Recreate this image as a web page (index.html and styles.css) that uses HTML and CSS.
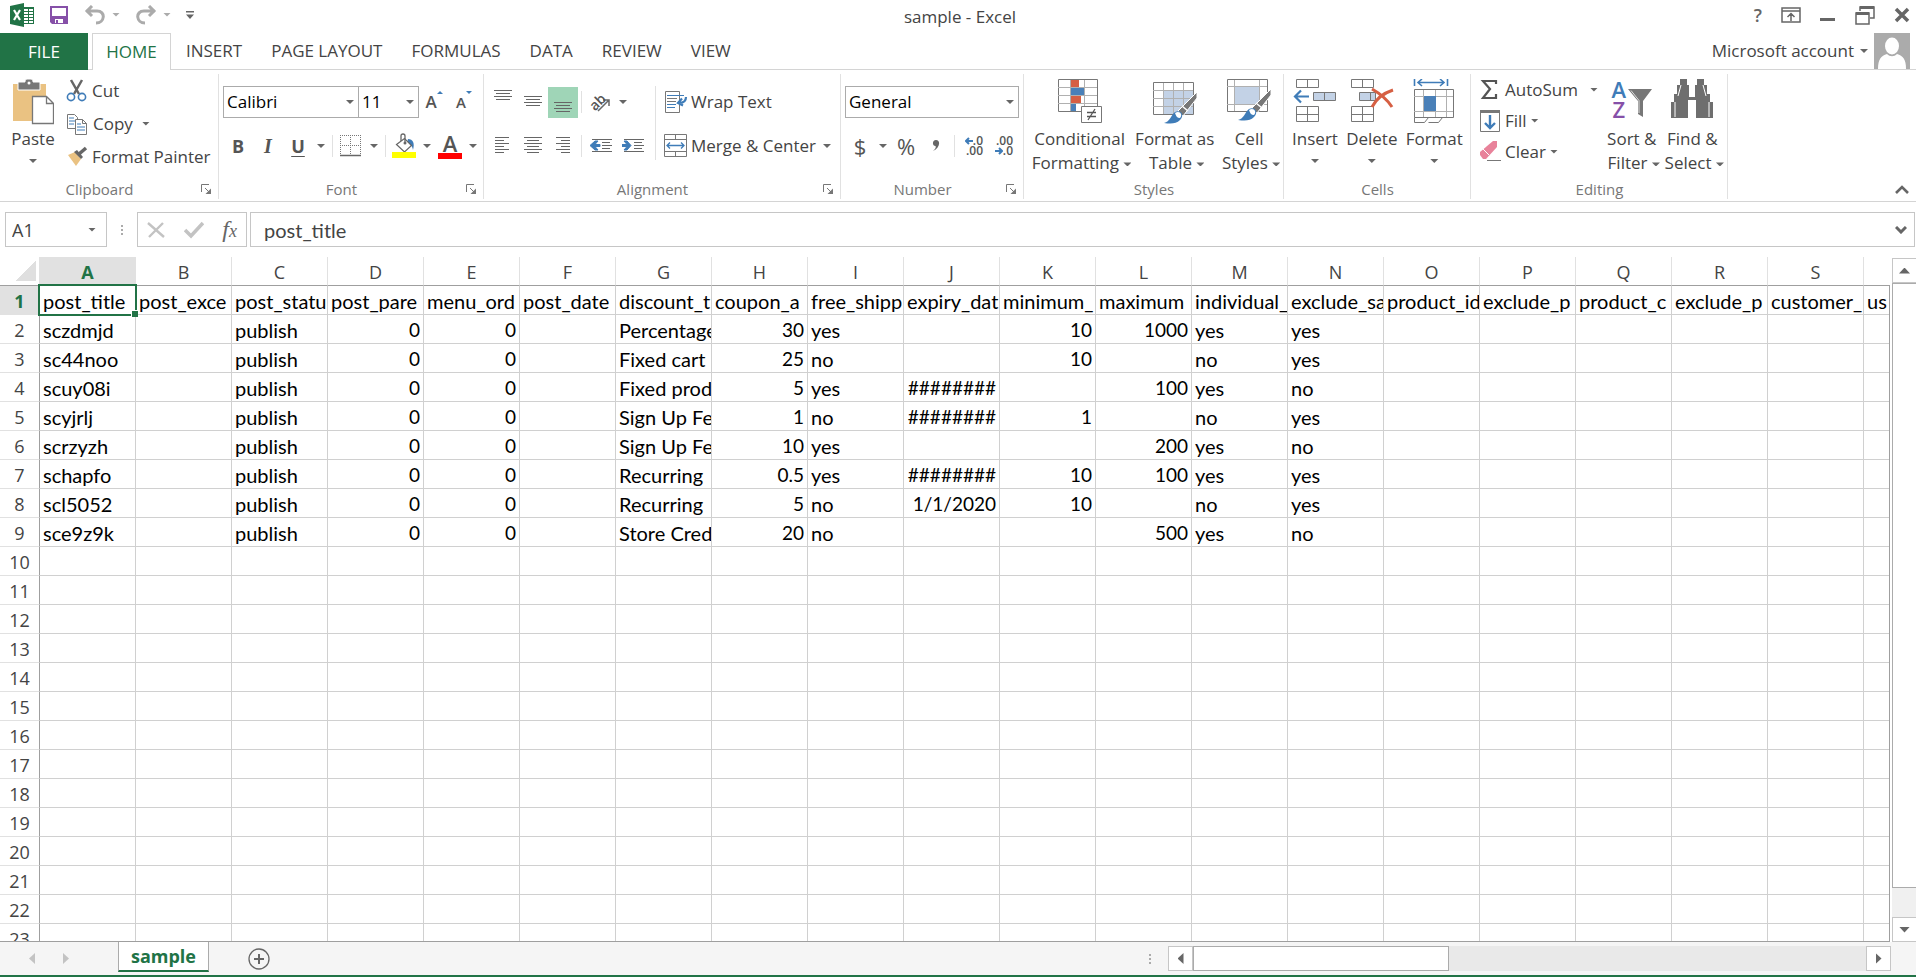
FILE: index.html
```html
<!DOCTYPE html>
<html lang="en">
<head>
    <meta charset="UTF-8">
    <meta name="viewport" content="width=device-width, initial-scale=1.0">
    <title>sample - Excel</title>
    <link rel="stylesheet" href="styles.css">
</head>
<body>
    <header class="title-bar">
        <div class="quick-access">
            <svg class="app-logo" width="24" height="24" viewBox="0 0 24 24">
                <path d="M12 4h12v17H12z" fill="#217346"/>
                <path d="M14 6h4v2h-4zM19 6h4v2h-4zM14 9h4v2h-4zM19 9h4v2h-4zM14 12h4v2h-4zM19 12h4v2h-4zM14 15h4v2h-4zM19 15h4v2h-4zM14 18h4v2h-4zM19 18h4v2h-4z" fill="#fff"/>
                <path d="M0 3L14 0v24L0 21z" fill="#217346"/>
                <path d="M4 7l6 10M10 7l-6 10" stroke="#fff" stroke-width="2.200"/>
            </svg>
            <button class="qa-button" aria-label="Save">
                <svg width="20" height="20" viewBox="0 0 20 20">
                    <path d="M1 1h18v18H3l-2-2z" fill="#8650a8"/>
                    <path d="M3 3h14v8H3zM6 14h8v4H6z" fill="#fff"/>
                    <path d="M7 15h2v3H7z" fill="#8650a8"/>
                </svg>
            </button>
            <button class="qa-button" aria-label="Undo">
                <svg width="22" height="20" viewBox="0 0 22 20"><path d="M8 1L3 6l5 5M2 6h11c9 0 8 12-1 12" fill="none" stroke="#ababab" stroke-width="3"/></svg>
            </button>
            <span class="caret light"></span>
            <button class="qa-button" aria-label="Redo">
                <svg width="22" height="20" viewBox="0 0 22 20"><path d="M14 1l5 5-5 5M20 6H9C0 6 1 18 10 18" fill="none" stroke="#ababab" stroke-width="3"/></svg>
            </button>
            <span class="caret light"></span>
            <button class="qa-button customize" aria-label="Customize">
                <svg width="8" height="8" viewBox="0 0 8 8"><path d="M0 0h8v1.500H0zM0 3.500h8L4 8z" fill="#666"/></svg>
            </button>
        </div>
        <h1>sample - Excel</h1>
        <div class="window-controls">
            <button class="help" aria-label="Help">?</button>
            <button aria-label="Ribbon display options">
                <svg width="20" height="16" viewBox="0 0 20 16"><path d="M1 1h18v14H1zM1 4h18M10 14V7M6.500 10L10 6.500 13.500 10" fill="none" stroke="#666" stroke-width="1.500"/></svg>
            </button>
            <button aria-label="Minimize">
                <svg width="16" height="16" viewBox="0 0 16 16"><path d="M0 11h15v3H0z" fill="#666"/></svg>
            </button>
            <button aria-label="Restore">
                <svg width="20" height="20" viewBox="0 0 20 20"><path d="M5 6V2h14v11h-4M1 8h13v11H1z" fill="none" stroke="#666" stroke-width="1.500"/><path d="M5 1h14v3H5zM1 7h13v3H1z" fill="#666"/></svg>
            </button>
            <button aria-label="Close">
                <svg width="16" height="16" viewBox="0 0 16 16"><path d="M2 2l12 12M14 2L2 14" stroke="#666" stroke-width="3.500"/></svg>
            </button>
        </div>
    </header>

    <nav class="tabs">
        <button class="tab file">FILE</button>
        <button class="tab active">HOME</button>
        <button class="tab">INSERT</button>
        <button class="tab">PAGE LAYOUT</button>
        <button class="tab">FORMULAS</button>
        <button class="tab">DATA</button>
        <button class="tab">REVIEW</button>
        <button class="tab">VIEW</button>
        <button class="account">
            Microsoft account
            <span class="caret"></span>
            <svg width="36" height="36" viewBox="0 0 36 36">
                <path d="M0 0h36v36H0z" fill="#ababab"/>
                <ellipse cx="18" cy="13" rx="7" ry="8.500" fill="#fff"/>
                <path d="M4 36c0-10 3-13 9-15 3 3 7 3 10 0 6 2 9 5 9 15z" fill="#fff"/>
            </svg>
        </button>
    </nav>

    <section class="ribbon">
        <div class="group clipboard">
            <div class="group-body">
                <button class="big-button paste">
                    <svg width="42" height="46" viewBox="0 0 42 46">
                        <path d="M1 5h33v37H1z" fill="#eac282"/>
                        <path d="M6 3h7V2q0-2 2-2h4q2 0 2 2v1h7v8H6z" fill="#777" stroke="#fff"/>
                        <circle cx="17" cy="4" r="1.500" fill="#fff"/>
                        <path d="M20.500 17.500h14l7 7v20h-21zM34.500 17.500v7h7" fill="#fff" stroke="#777" stroke-width="1.300"/>
                    </svg>
                    <span>Paste</span>
                    <span class="caret"></span>
                </button>
                <div class="button-list">
                    <button class="small-button">
                        <svg width="22" height="24" viewBox="0 0 22 24">
                            <path d="M5 1l8 14M16 1L8 15" stroke="#666" stroke-width="2.500"/>
                            <circle cx="5" cy="18" r="3.600" fill="#fff" stroke="#3f7cb8" stroke-width="1.600"/>
                            <circle cx="16" cy="18" r="3.600" fill="#fff" stroke="#3f7cb8" stroke-width="1.600"/>
                        </svg>
                        Cut
                    </button>
                    <button class="small-button copy">
                        <svg width="22" height="24" viewBox="0 0 22 24">
                            <path d="M1.500 2.500h7l3 3v11h-10z" fill="#fff" stroke="#777"/>
                            <path d="M3 6h5M3 9h6M3 12h5" stroke="#3f7cb8"/>
                            <path d="M9.500 7.500h7l4 4v11h-11zM16.500 7.500v4h4" fill="#fff" stroke="#777"/>
                            <path d="M11 12h4M11 15h8M11 18h8" stroke="#3f7cb8"/>
                        </svg>
                        Copy
                        <span class="caret"></span>
                    </button>
                    <button class="small-button">
                        <svg width="22" height="24" viewBox="0 0 22 24">
                            <path d="M2 10l7-3 6 7-5 7z" fill="#eac282"/>
                            <path d="M8 7l3-2 6 7-2 2z" fill="#666"/>
                            <path d="M13 9l7-6" stroke="#666" stroke-width="3.500"/>
                        </svg>
                        Format Painter
                    </button>
                </div>
            </div>
            <div class="group-label"><span>Clipboard</span><button class="launcher" aria-label="Clipboard settings"><svg width="10" height="10" viewBox="0 0 10 10"><path d="M.5 8V.5H8M4 4l4 4" fill="none" stroke="#777"/><path d="M10 4.500V10H4.500z" fill="#777"/></svg></button></div>
        </div>

        <div class="group font">
            <div class="group-body">
                <div class="tool-rows">
                    <div class="tool-row">
                        <div class="combo font-name"><select aria-label="Font"><option>Calibri</option></select><span class="caret"></span></div>
                        <div class="combo font-size"><select aria-label="Font size"><option>11</option></select><span class="caret"></span></div>
                        <button class="tool grow-font" aria-label="Increase font size">A<svg width="6" height="22" viewBox="0 0 6 22"><path d="M0 3h6L3 0z" fill="#3f7cb8"/></svg></button>
                        <button class="tool shrink-font" aria-label="Decrease font size">A<svg width="6" height="22" viewBox="0 0 6 22"><path d="M0 0h6L3 3z" fill="#3f7cb8"/></svg></button>
                    </div>
                    <div class="tool-row">
                        <button class="tool bold">B</button>
                        <button class="tool italic">I</button>
                        <button class="tool underline">U</button>
                        <span class="caret"></span>
                        <span class="divider"></span>
                        <button class="tool" aria-label="Borders">
                            <svg width="22" height="22" viewBox="0 0 22 22"><path d="M.5 0v20M10.500 0v20M20.500 0v20M0 .5h21M0 10.500h21" stroke="#777" stroke-dasharray="1 1"/><path d="M0 20.500h21" stroke="#666" stroke-width="1.500"/></svg>
                        </button>
                        <span class="caret"></span>
                        <span class="divider"></span>
                        <button class="tool" aria-label="Fill color">
                            <svg width="24" height="26" viewBox="0 0 24 26">
                                <path d="M16 6c5 0 7 4 5 11-1-5-3-6-6-7z" fill="#3f7cb8"/>
                                <path d="M4.500 11.500l8-6 7 7-7 6.500z" fill="#fff" stroke="#666" stroke-width="1.200"/>
                                <path d="M9 8V3q0-2 2-2t2 2v7" fill="none" stroke="#666" stroke-width="1.300"/>
                                <circle cx="13" cy="10" r="1.500" fill="#666"/>
                                <path d="M0 19h24v6H0z" fill="#ff0"/>
                            </svg>
                        </button>
                        <span class="caret"></span>
                        <button class="tool font-color" aria-label="Font color">A</button>
                        <span class="caret"></span>
                    </div>
                </div>
            </div>
            <div class="group-label"><span>Font</span><button class="launcher" aria-label="Font settings"><svg width="10" height="10" viewBox="0 0 10 10"><path d="M.5 8V.5H8M4 4l4 4" fill="none" stroke="#777"/><path d="M10 4.500V10H4.500z" fill="#777"/></svg></button></div>
        </div>

        <div class="group alignment">
            <div class="group-body">
                <div class="tool-rows">
                    <div class="tool-row">
                        <button class="tool" aria-label="Top align"><svg width="18" height="24" viewBox="0 0 18 24"><path d="M0 .5h18M2 3.500h14M0 6.500h18M2 9.500h14" stroke="#666"/></svg></button>
                        <button class="tool" aria-label="Middle align"><svg width="18" height="24" viewBox="0 0 18 24"><path d="M0 6.500h18M2 9.500h14M0 12.500h18M2 15.500h14" stroke="#666"/></svg></button>
                        <button class="tool selected" aria-label="Bottom align"><svg width="18" height="24" viewBox="0 0 18 24"><path d="M0 12.500h18M2 15.500h14M0 18.500h18M2 21.500h14" stroke="#666"/></svg></button>
                        <span class="divider"></span>
                        <button class="tool" aria-label="Orientation"><span class="slanted">ab</span><svg width="14" height="14" viewBox="0 0 14 14" class="slanted-arrow"><path d="M1 13L12 2M6 2h6v6" fill="none" stroke="#666" stroke-width="1.500"/></svg></button>
                        <span class="caret"></span>
                    </div>
                    <div class="tool-row">
                        <button class="tool" aria-label="Align left"><svg width="18" height="18" viewBox="0 0 18 18"><path d="M1 .5h14M1 3.500h9M1 6.500h14M1 9.500h9M1 12.500h14M1 15.500h9" stroke="#666"/></svg></button>
                        <button class="tool" aria-label="Center"><svg width="18" height="18" viewBox="0 0 18 18"><path d="M0 .5h18M3 3.500h12M0 6.500h18M3 9.500h12M0 12.500h18M3 15.500h12" stroke="#666"/></svg></button>
                        <button class="tool" aria-label="Align right"><svg width="18" height="18" viewBox="0 0 18 18"><path d="M2 .5h14M7 3.500h9M2 6.500h14M7 9.500h9M2 12.500h14M7 15.500h9" stroke="#666"/></svg></button>
                        <span class="divider"></span>
                        <button class="tool indent" aria-label="Decrease indent"><svg width="22" height="16" viewBox="0 0 22 16"><path d="M2 1.500h20M12 4.500h8M12 7.500h10M12 10.500h8M2 13.500h20" stroke="#666"/><path d="M0 7.500L5 3h3L5 6.500h5v2H5L8 12H5z" fill="#3f7cb8" stroke="#3f7cb8"/></svg></button>
                        <button class="tool indent" aria-label="Increase indent"><svg width="22" height="16" viewBox="0 0 22 16"><path d="M2 1.500h20M12 4.500h8M12 7.500h10M12 10.500h8M2 13.500h20" stroke="#666"/><path d="M9 7.500L5 3H2l3 3.500H0v2h5L2 12h3z" fill="#3f7cb8" stroke="#3f7cb8"/></svg></button>
                    </div>
                </div>
                <span class="divider tall"></span>
                <div class="tool-rows">
                    <button class="wide-button">
                        <svg width="24" height="24" viewBox="0 0 24 24">
                            <path d="M1.500 1.500h14v21h-14z" fill="#fff" stroke="#777"/>
                            <path d="M3 5.500h17M3 14.500h9M3 17.500h8" stroke="#3f7cb8"/>
                            <path d="M3 8.500h10M3 11.500h9" stroke="#777"/>
                            <path d="M22 7c0 5-3 6-7 6M18 8.500L14 13l5 2.500" fill="none" stroke="#3f7cb8" stroke-width="2.200"/>
                        </svg>
                        Wrap Text
                    </button>
                    <button class="wide-button">
                        <svg width="24" height="24" viewBox="0 0 24 24">
                            <path d="M.5 .5h22v22H.5zM.5 5.500h22M.5 17.500h22M11.500 .5v5M11.500 17.500v5" fill="#fff" stroke="#777"/>
                            <path d="M3 11.500h17M6 8.500l-3 3 3 3M17 8.500l3 3-3 3" fill="none" stroke="#3f7cb8" stroke-width="1.300"/>
                        </svg>
                        Merge &amp; Center
                        <span class="caret"></span>
                    </button>
                </div>
            </div>
            <div class="group-label"><span>Alignment</span><button class="launcher" aria-label="Alignment settings"><svg width="10" height="10" viewBox="0 0 10 10"><path d="M.5 8V.5H8M4 4l4 4" fill="none" stroke="#777"/><path d="M10 4.500V10H4.500z" fill="#777"/></svg></button></div>
        </div>

        <div class="group number">
            <div class="group-body">
                <div class="tool-rows">
                    <div class="tool-row">
                        <div class="combo format"><select aria-label="Number format"><option>General</option></select><span class="caret"></span></div>
                    </div>
                    <div class="tool-row">
                        <button class="tool symbol">$</button>
                        <span class="caret"></span>
                        <button class="tool symbol">%</button>
                        <button class="tool" aria-label="Comma style"><svg width="8" height="18" viewBox="0 0 8 18"><path d="M1 14c3-2 3-4 2.500-5C0 9 0 3 4 3c5 0 4 8-3 11z" fill="#666"/></svg></button>
                        <span class="divider"></span>
                        <button class="tool decimals"><span><svg width="8" height="8" viewBox="0 0 8 8"><path d="M8 4H1M4 1L1 4l3 3" fill="none" stroke="#3f7cb8" stroke-width="2"/></svg>.0</span><span>.00</span></button>
                        <button class="tool decimals"><span>.00</span><span><svg width="8" height="8" viewBox="0 0 8 8"><path d="M0 4h7M4 1l3 3-3 3" fill="none" stroke="#3f7cb8" stroke-width="2"/></svg>.0</span></button>
                    </div>
                </div>
            </div>
            <div class="group-label"><span>Number</span><button class="launcher" aria-label="Number settings"><svg width="10" height="10" viewBox="0 0 10 10"><path d="M.5 8V.5H8M4 4l4 4" fill="none" stroke="#777"/><path d="M10 4.500V10H4.500z" fill="#777"/></svg></button></div>
        </div>

        <div class="group styles">
            <div class="group-body">
                <button class="big-button">
                    <svg width="46" height="46" viewBox="0 0 46 46">
                        <path d="M1.500 .5h39v32h-39z" fill="#fff" stroke="#777"/>
                        <path d="M14 1h8v7h-8zM14 17h10v7H14z" fill="#d65f43"/>
                        <path d="M14 9h13v7H14zM14 25h5v7h-5z" fill="#4a80b8"/>
                        <path d="M1 8.500h39M1 16.500h39M1 24.500h39M13.500 1v31M27.500 1v31" stroke="#b0b0b0"/>
                        <path d="M24.500 27.500h20v16h-20z" fill="#fff" stroke="#777"/>
                        <path d="M30 33.500h9M30 37.500h9M38 30l-7 11" stroke="#555" stroke-width="1.300"/>
                    </svg>
                    <span>Conditional</span>
                    <span>Formatting <i class="caret"></i></span>
                </button>
                <button class="big-button">
                    <svg width="46" height="46" viewBox="0 0 46 46">
                        <path d="M1.500 3.500h40v32h-40z" fill="#fff" stroke="#777"/>
                        <path d="M12 12h29v23H12z" fill="#c3d2e6"/>
                        <path d="M1 11.500h40M1 19.500h40M1 27.500h40M11.500 4v31M21.500 4v31M31.500 4v31" stroke="#b0b0b0"/>
                        <path d="M45 13v6L31 37l-5-5z" fill="#777" stroke="#fff"/>
                        <path d="M30 27l6 5" stroke="#fff" stroke-width="1.500"/>
                        <path d="M12 44c6-1 7-8 11-11 6-3 10 3 5 8-4 4-9 4-16 3z" fill="#3f7cb8"/>
                        <path d="M23 34c5-3 8 2 5 5-3 0-4-2-5-5z" fill="#fff"/>
                    </svg>
                    <span>Format as</span>
                    <span>Table <i class="caret"></i></span>
                </button>
                <button class="big-button">
                    <svg width="46" height="46" viewBox="0 0 46 46">
                        <path d="M1.500 .5h40v32h-40z" fill="#fff" stroke="#777"/>
                        <path d="M9 8h24v17H9z" fill="#c3d2e6"/>
                        <path d="M1 7.500h40M1 25.500h40M8.500 1v31M33.500 1v31" stroke="#b0b0b0"/>
                        <path d="M45 10v6L31 34l-5-5z" fill="#777" stroke="#fff"/>
                        <path d="M30 24l6 5" stroke="#fff" stroke-width="1.500"/>
                        <path d="M12 41c6-1 7-8 11-11 6-3 10 3 5 8-4 4-9 4-16 3z" fill="#3f7cb8"/>
                        <path d="M23 31c5-3 8 2 5 5-3 0-4-2-5-5z" fill="#fff"/>
                    </svg>
                    <span>Cell</span>
                    <span>Styles <i class="caret"></i></span>
                </button>
            </div>
            <div class="group-label"><span>Styles</span></div>
        </div>

        <div class="group cells">
            <div class="group-body">
                <button class="big-button">
                    <svg width="44" height="46" viewBox="0 0 44 46">
                        <path d="M3.500 .5h22v8h-22zM14.500 .5v8M3.500 27.500h22v15h-22zM14.500 27.500v15M3.500 35.500h22" fill="#fff" stroke="#777"/>
                        <path d="M20.500 13.500h22v8h-22zM31.500 13.500v8" fill="#c3d2e6" stroke="#777"/>
                        <path d="M16 17.500H2M8 11.500l-6 6 6 6" fill="none" stroke="#3f7cb8" stroke-width="2.200"/>
                    </svg>
                    <span>Insert</span>
                    <span class="caret"></span>
                </button>
                <button class="big-button">
                    <svg width="44" height="46" viewBox="0 0 44 46">
                        <path d="M1.500 .5h22v8h-22zM12.500 .5v8M1.500 27.500h22v15h-22zM12.500 27.500v15M1.500 35.500h22" fill="#fff" stroke="#777"/>
                        <path d="M9.500 13.500h16v8h-16zM20.500 13.500v8" fill="#c3d2e6" stroke="#777"/>
                        <path d="M22 10c7 4 15 10 20 18M43 11c-9 3-17 9-21 17" fill="none" stroke="#d65f43" stroke-width="3"/>
                    </svg>
                    <span>Delete</span>
                    <span class="caret"></span>
                </button>
                <button class="big-button">
                    <svg width="42" height="46" viewBox="0 0 42 46">
                        <path d="M1.500 0v7M34.500 0v7M5 3.500h26M9 0L5 3.500 9 7M27 0l4 3.500L27 7" fill="none" stroke="#3f7cb8" stroke-width="1.600"/>
                        <path d="M1.500 10.500h39v28h-39z" fill="#fff" stroke="#777"/>
                        <path d="M1 17.500h39M1 32.500h39M10.500 11v27M22.500 11v27M33.500 11v27" stroke="#b0b0b0"/>
                        <path d="M11 17h12v15H11z" fill="#4a80b8"/>
                        <path d="M1.500 38.500v5h10l4-5M15.500 43.500h10l4-5" fill="none" stroke="#777"/>
                    </svg>
                    <span>Format</span>
                    <span class="caret"></span>
                </button>
            </div>
            <div class="group-label"><span>Cells</span></div>
        </div>

        <div class="group editing">
            <div class="group-body">
                <div class="button-list">
                    <button class="small-button autosum">
                        <svg width="22" height="24" viewBox="0 0 22 24"><path d="M17 6V3H4l7 8-7 9h13v-4" fill="none" stroke="#555" stroke-width="2.200"/></svg>
                        AutoSum
                        <span class="caret"></span>
                    </button>
                    <button class="small-button">
                        <svg width="22" height="24" viewBox="0 0 22 24"><path d="M1.500 1.500h19v21h-19z" fill="#fff" stroke="#777"/><path d="M1 1h20v3H1z" fill="#777"/><path d="M11 6v13M6 14l5 5 5-5" fill="none" stroke="#3f7cb8" stroke-width="2.400"/></svg>
                        Fill
                        <span class="caret"></span>
                    </button>
                    <button class="small-button">
                        <svg width="22" height="24" viewBox="0 0 22 24"><path d="M14 1h4v6L7 19H4L1 15v-3z" fill="#e8829a"/><path d="M4 9l6 6" stroke="#fff"/><path d="M8 20.500h14" stroke="#777"/></svg>
                        Clear
                        <span class="caret"></span>
                    </button>
                </div>
                <button class="big-button">
                    <span class="sort-icon">
                        <span class="sort-letters"><b class="letter-a">A</b><b class="letter-z">Z</b></span>
                        <svg width="24" height="28" viewBox="0 0 24 28"><path d="M0 0h24l-9 12v16l-5-3V12z" fill="#777"/><path d="M3 1.500l8 10V24" fill="none" stroke="#ddd"/></svg>
                    </span>
                    <span>Sort &amp;</span>
                    <span>Filter <i class="caret"></i></span>
                </button>
                <button class="big-button">
                    <svg width="44" height="46" viewBox="0 0 44 46">
                        <path d="M10 0h7v6h2v12h6V6h2V0h7v6h3v9h3v8h3v16H26V21h-8v18H1V23h3v-8h3V6h3z" fill="#6e6e6e"/>
                        <path d="M11 6L8 17M5 23v15M33 6l3 11M39 23v15" stroke="#fff"/>
                        <path d="M19 16h6" stroke="#fff" stroke-width="1.500"/>
                    </svg>
                    <span>Find &amp;</span>
                    <span>Select <i class="caret"></i></span>
                </button>
            </div>
            <div class="group-label"><span>Editing</span></div>
        </div>
        <button class="collapse" aria-label="Collapse the ribbon">
            <svg width="14" height="10" viewBox="0 0 14 10"><path d="M1 8l6-6 6 6" fill="none" stroke="#666" stroke-width="2.600"/></svg>
        </button>
    </section>

    <section class="formula-bar">
        <div class="name-box">
            <input type="text" value="A1" aria-label="Name box">
            <span class="caret"></span>
        </div>
        <span class="dots"></span>
        <div class="formula-buttons">
            <button aria-label="Cancel"><svg width="18" height="18" viewBox="0 0 18 18"><path d="M1 2l16 14M16 2L2 16" stroke="#c3c3c3" stroke-width="2.400"/></svg></button>
            <button aria-label="Enter"><svg width="20" height="18" viewBox="0 0 20 18"><path d="M1 9l6 6L19 2" fill="none" stroke="#c3c3c3" stroke-width="3.600"/></svg></button>
            <button class="fx" aria-label="Insert function">f<small>x</small></button>
        </div>
        <div class="formula-field">
            <input type="text" value="post_title" aria-label="Formula">
            <svg width="12" height="8" viewBox="0 0 12 8"><path d="M1 1l5 5 5-5" fill="none" stroke="#666" stroke-width="3"/></svg>
        </div>
    </section>

    <main class="sheet">
        <div class="grid-pane">
            <table class="grid">
                <thead><tr id="columnHeads"><th class="corner"></th></tr></thead>
                <tbody id="rows"></tbody>
            </table>
        </div>
        <div class="scroll-y">
            <button aria-label="Scroll up"><span class="arrow up"></span></button>
            <div class="track"><div class="thumb"></div></div>
            <button aria-label="Scroll down"><span class="arrow down"></span></button>
        </div>
    </main>

    <footer class="sheet-bar">
        <button class="sheet-nav" aria-label="Previous sheet"><span class="arrow left"></span></button>
        <button class="sheet-nav" aria-label="Next sheet"><span class="arrow right"></span></button>
        <button class="sheet-tab">sample</button>
        <button class="add-sheet" aria-label="New sheet">
            <svg width="22" height="22" viewBox="0 0 22 22"><circle cx="11" cy="11" r="10" fill="none" stroke="#666" stroke-width="1.300"/><path d="M6 11h10M11 6v10" stroke="#666" stroke-width="2"/></svg>
        </button>
        <span class="dots"></span>
        <div class="scroll-x">
            <button aria-label="Scroll left"><span class="arrow left"></span></button>
            <div class="track"><div class="thumb"></div></div>
            <button aria-label="Scroll right"><span class="arrow right"></span></button>
        </div>
    </footer>

    <script>
        const columns = 'ABCDEFGHIJKLMNOPQRS'.split('').concat('');
        const rowCount = 23;
        const data = [
            ['post_title', 'post_exce', 'post_statu', 'post_pare', 'menu_ord', 'post_date', 'discount_t', 'coupon_a', 'free_shipp', 'expiry_dat', 'minimum_', 'maximum', 'individual_', 'exclude_sa', 'product_id', 'exclude_p', 'product_c', 'exclude_p', 'customer_', 'us'],
            ['sczdmjd', '', 'publish', 0, 0, '', 'Percentage', 30, 'yes', '', 10, 1000, 'yes', 'yes'],
            ['sc44noo', '', 'publish', 0, 0, '', 'Fixed cart', 25, 'no', '', 10, '', 'no', 'yes'],
            ['scuy08i', '', 'publish', 0, 0, '', 'Fixed prod', 5, 'yes', '########', '', 100, 'yes', 'no'],
            ['scyjrlj', '', 'publish', 0, 0, '', 'Sign Up Fe', 1, 'no', '########', 1, '', 'no', 'yes'],
            ['scrzyzh', '', 'publish', 0, 0, '', 'Sign Up Fe', 10, 'yes', '', '', 200, 'yes', 'no'],
            ['schapfo', '', 'publish', 0, 0, '', 'Recurring', 0.5, 'yes', '########', 10, 100, 'yes', 'yes'],
            ['scl5052', '', 'publish', 0, 0, '', 'Recurring', 5, 'no', '1/1/2020', 10, '', 'no', 'yes'],
            ['sce9z9k', '', 'publish', 0, 0, '', 'Store Cred', 20, 'no', '', '', 500, 'yes', 'no']
        ];

        const columnHeads = document.getElementById('columnHeads');
        const rows = document.getElementById('rows');

        columns.forEach((name, i) => {
            let th = document.createElement('th');
            th.innerText = name;
            if (i === 0) th.classList.add('current');
            columnHeads.appendChild(th);
        });

        for (let r = 0; r < rowCount; r++) {
            let tr = document.createElement('tr');
            let th = document.createElement('th');
            th.innerText = r + 1;
            if (r === 0) th.classList.add('current');
            tr.appendChild(th);
            columns.forEach((name, c) => {
                let td = document.createElement('td');
                let value = data[r] && data[r][c] !== undefined ? data[r][c] : '';
                td.innerText = value;
                // numbers and dates sit on the right
                if (typeof value === 'number' || (name === 'J' && r > 0)) td.classList.add('num');
                if (r === 0 && c === 0) td.classList.add('active-cell');
                tr.appendChild(td);
            });
            rows.appendChild(tr);
        }
    </script>
</body>
</html>
```
FILE: styles.css
```css
* {
    margin: 0;
    padding: 0;
    box-sizing: border-box;
}

body {
    display: flex;
    flex-direction: column;
    height: 100vh;
    overflow: hidden;
    background-color: #fff;
    color: #444;
    font-family: 'Open Sans', 'Segoe UI', sans-serif;
    font-size: 17px;
    line-height: 24px;
}

button,
input,
select {
    font: inherit;
    color: inherit;
    background: none;
    border: none;
    outline: none;
}

svg {
    display: block;
    flex: none;
}

.caret {
    flex: none;
    display: inline-block;
    width: 16px;
    height: 4px;
    vertical-align: middle;
    background-color: #666;
    clip-path: polygon(4px 0, 12px 0, 8px 4px);
}

.caret.light {
    background-color: #ababab;
}

.divider {
    width: 1px;
    height: 22px;
    margin: 0 3px;
    background-color: #e1e1e1;
}

.divider.tall {
    height: 74px;
    margin: 12px 4px 0 6px;
}

/* title bar */
.title-bar {
    display: grid;
    grid-template-columns: 1fr auto 1fr;
    align-items: center;
    height: 33px;
    padding: 0 6px 4px 10px;
}

.title-bar h1 {
    padding-top: 4px;
    font-size: 17px;
    font-weight: normal;
}

.quick-access {
    display: flex;
    align-items: center;
}

.qa-button {
    margin-left: 15px;
}

.quick-access .caret + .qa-button {
    margin-left: 11px;
}

.quick-access .customize {
    margin-left: 13px;
}

.quick-access .caret {
    margin-left: 2px;
}

.window-controls {
    display: flex;
    justify-content: flex-end;
    align-items: center;
    gap: 19px;
}

.help {
    font-weight: 600;
    font-size: 18px;
    color: #666;
}

/* ribbon tabs */
.tabs {
    display: flex;
    height: 37px;
    border-bottom: 1px solid #d4d4d4;
}

.tab {
    height: 36px;
    padding: 0 14px 0 15px;
}

.tab.file {
    width: 88px;
    height: 37px;
    margin-right: 4px;
    padding: 0;
    background-color: #217346;
    color: #fff;
}

.tab.active {
    width: 79px;
    height: 37px;
    padding: 0;
    border: 1px solid #d4d4d4;
    border-bottom: none;
    background-color: #fff;
    color: #217346;
}

.account {
    display: flex;
    align-items: center;
    gap: 2px;
    margin-left: auto;
    margin-right: 6px;
}

/* ribbon */
.ribbon {
    display: flex;
    height: 132px;
    padding: 4px 0 2px;
    border-bottom: 1px solid #d4d4d4;
}

.group {
    display: flex;
    flex-direction: column;
    flex: none;
    padding: 0 3px 0 4px;
    border-right: 1px solid #e1e1e1;
}

.clipboard { width: 219px; }
.font { width: 265px; }
.alignment { width: 357px; }
.number { width: 183px; }
.styles { width: 260px; }
.cells { width: 187px; }
.editing { width: 257px; }

.group-body {
    display: flex;
    flex: 1;
}

.group-label {
    display: flex;
    align-items: center;
    height: 20px;
    font-size: 15px;
    line-height: 20px;
    color: #777;
}

.group-label span {
    flex: 1;
    text-align: center;
}

.launcher {
    width: 20px;
    padding-left: 6px;
}

.big-button {
    display: flex;
    flex: 1 1 auto;
    flex-direction: column;
    align-items: center;
    padding-top: 5px;
    white-space: nowrap;
}

.big-button svg {
    margin-bottom: 2px;
}

.big-button .caret {
    margin-top: 8px;
}

.big-button i.caret {
    width: 12px;
    margin: 0 -4px;
}

.big-button.paste {
    flex: none;
    width: 58px;
}

.button-list {
    display: flex;
    flex-direction: column;
}

.small-button {
    display: flex;
    align-items: center;
    gap: 4px;
    height: 33px;
    padding-left: 4px;
    white-space: nowrap;
}

.small-button.copy {
    gap: 5px;
}

.editing .button-list {
    width: 128px;
}

.editing .small-button {
    height: 31px;
}

.editing .small-button .caret {
    margin-left: -4px;
}

.editing .autosum .caret {
    margin-left: 4px;
}

.tool-rows {
    display: flex;
    flex-direction: column;
    gap: 12px;
    padding-top: 12px;
}

.tool-row {
    display: flex;
    align-items: center;
    height: 32px;
}

.tool {
    display: flex;
    justify-content: center;
    align-items: center;
    flex: none;
    width: 30px;
    height: 31px;
    color: #555;
}

.tool.selected {
    background-color: #9fd5b7;
}

.tool.indent {
    width: 32px;
}

.combo {
    display: flex;
    align-items: center;
    height: 32px;
    border: 1px solid #ababab;
}

.combo select {
    flex: 1;
    min-width: 0;
    padding-left: 3px;
    appearance: none;
    color: #000;
}

.font-name { width: 136px; }
.font-size { width: 61px; margin-left: -1px; }
.format { width: 174px; }

.grow-font,
.shrink-font {
    font-size: 17px;
    font-weight: 600;
}

.shrink-font {
    font-size: 15px;
}

.bold,
.underline {
    font-size: 18px;
    font-weight: bold;
}

.italic {
    font-family: 'Liberation Serif', serif;
    font-size: 20px;
    font-style: italic;
    font-weight: bold;
}

.underline {
    text-decoration: underline;
    text-decoration-thickness: 1px;
    text-underline-offset: 3px;
}

.font-color {
    width: 24px;
    height: 25px;
    margin: 0 3px;
    border-bottom: 6px solid #f00;
    font-size: 22px;
    font-weight: 600;
    line-height: 20px;
}

.slanted {
    font-size: 14px;
    font-weight: 600;
    transform: rotate(-45deg);
}

.slanted-arrow {
    margin: 6px 0 0 -8px;
}

.wide-button {
    display: flex;
    align-items: center;
    gap: 3px;
    height: 32px;
    padding-left: 4px;
    white-space: nowrap;
}

.symbol {
    font-size: 22px;
}

.decimals {
    flex-direction: column;
    font-size: 12px;
    line-height: 10px;
    font-weight: 600;
    align-items: flex-end;
    padding-right: 5px;
}

.decimals span {
    display: flex;
    align-items: center;
}

.sort-icon {
    display: flex;
    height: 46px;
    margin-bottom: 2px;
    gap: 2px;
}

.sort-icon svg {
    margin-top: 10px;
}

.sort-letters {
    display: flex;
    flex-direction: column;
    font-size: 22px;
    line-height: 20px;
}

.sort-letters b {
    font-weight: 600;
}

.letter-a { color: #3f7cb8; }
.letter-z { color: #8650a8; }

.collapse {
    align-self: flex-end;
    margin-left: auto;
    padding: 0 7px 4px 0;
}

/* formula bar */
.formula-bar {
    display: flex;
    align-items: center;
    height: 55px;
    padding: 0 1px 0 5px;
}

.name-box,
.formula-buttons,
.formula-field {
    display: flex;
    align-items: center;
    height: 35px;
    border: 1px solid #c6c6c6;
}

.name-box {
    width: 102px;
    padding: 0 6px;
}

.name-box input {
    flex: 1;
    min-width: 0;
    font-size: 18px;
}

.dots {
    width: 2px;
    height: 10px;
    background: repeating-linear-gradient(#ababab 0 2px, transparent 2px 4px);
}

.formula-bar .dots {
    margin: 0 14px;
}

.formula-buttons {
    justify-content: space-between;
    width: 110px;
    margin-right: 3px;
    padding: 0 9px;
}

.fx {
    font-family: 'Liberation Serif', serif;
    font-size: 24px;
    font-style: italic;
    color: #666;
}

.fx small {
    font-size: 18px;
}

.formula-field {
    flex: 1;
    padding: 0 7px 0 13px;
}

.formula-field input {
    flex: 1;
    font-family: Lato, Calibri, sans-serif;
    font-size: 20px;
}

/* sheet */
.sheet {
    display: flex;
    flex: 1;
    min-height: 0;
}

.grid-pane {
    position: relative;
    flex: 1;
    min-width: 0;
    overflow: hidden;
    border-bottom: 1px solid #9f9f9f;
}

.grid-pane::after {
    content: '';
    position: absolute;
    top: 28px;
    right: 0;
    bottom: 0;
    width: 1px;
    background-color: #9f9f9f;
}

.grid {
    width: 1960px;
    table-layout: fixed;
    border-collapse: separate;
    border-spacing: 0;
}

.grid th {
    width: 96px;
    height: 29px;
    padding-top: 2px;
    font-size: 18px;
    font-weight: normal;
    border-right: 1px solid #e1e1e1;
    border-bottom: 1px solid #9f9f9f;
}

.grid th.corner,
.grid tbody th {
    width: 40px;
}

.grid tbody th {
    border-right-color: #9f9f9f;
    border-bottom-color: #e1e1e1;
}

.grid .corner {
    background: linear-gradient(135deg, transparent 50%, #dfdfdf 50%) 16px 4px / 20px 20px no-repeat;
}

.grid th.current {
    background-color: #e1e1e1;
    color: #217346;
    font-weight: bold;
}

.grid td {
    height: 29px;
    padding: 2px 3px 0;
    overflow: hidden;
    white-space: nowrap;
    font-family: Lato, Calibri, sans-serif;
    font-size: 20px;
    color: #000;
    border-right: 1px solid #d0d0d0;
    border-bottom: 1px solid #d0d0d0;
}

.grid .num {
    font-size: 19px;
    text-align: right;
}

.grid .active-cell {
    position: relative;
    overflow: visible;
}

.active-cell::before {
    content: '';
    position: absolute;
    inset: -2px;
    border: 2px solid #217346;
}

.active-cell::after {
    content: '';
    position: absolute;
    right: -3px;
    bottom: -3px;
    width: 6px;
    height: 6px;
    background-color: #217346;
    border: 1px solid #fff;
    border-width: 1px 0 0 1px;
}

/* scrollbars */
.arrow {
    display: block;
    margin: 0 auto;
    width: 6px;
    height: 11px;
    background-color: #666;
}

.arrow.up,
.arrow.down {
    width: 11px;
    height: 6px;
}

.arrow.up { clip-path: polygon(50% 0, 100% 100%, 0 100%); }
.arrow.down { clip-path: polygon(0 0, 100% 0, 50% 100%); }
.arrow.left { clip-path: polygon(100% 0, 100% 100%, 0 50%); }
.arrow.right { clip-path: polygon(0 0, 100% 50%, 0 100%); }

.scroll-y {
    display: flex;
    flex-direction: column;
    width: 24px;
    margin: 1px 0 0 2px;
}

.scroll-y button,
.scroll-x button {
    flex: none;
    width: 25px;
    height: 25px;
    border: 1px solid #c6c6c6;
    background-color: #fff;
}

.scroll-y .track {
    flex: 1;
    background-color: #f0f0f0;
}

.scroll-y .thumb {
    width: 25px;
    height: 95.5%;
    border: 1px solid #ababab;
    background-color: #fff;
}

.scroll-x {
    display: flex;
    width: 723px;
    height: 25px;
    margin-right: 25px;
}

.scroll-x .track {
    flex: 1;
    background-color: #e9e9e9;
}

.scroll-x .thumb {
    width: 38%;
    height: 25px;
    border: 1px solid #ababab;
    background-color: #fff;
}

/* sheet tabs */
.sheet-bar {
    display: flex;
    align-items: center;
    height: 35px;
    padding-left: 15px;
    background-color: #f5f5f5;
    border-bottom: 2px solid #217346;
}

.sheet-nav {
    width: 34px;
}

.sheet-nav .arrow {
    background-color: #c3c3c3;
}

.sheet-tab {
    align-self: flex-start;
    width: 91px;
    height: 30px;
    margin: 0 39px 0 35px;
    border: 1px solid #ababab;
    border-width: 0 1px 2px;
    border-bottom-color: #217346;
    background-color: #fff;
    color: #217346;
    font-size: 18px;
    font-weight: bold;
}

.sheet-bar .dots {
    margin: 0 17px 0 auto;
}
```
